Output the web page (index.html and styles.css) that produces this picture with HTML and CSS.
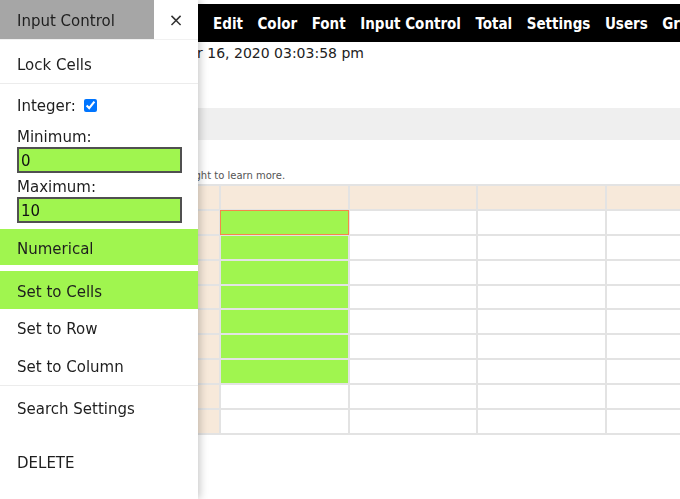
FILE: index.html
```html
<!DOCTYPE html>
<html lang="en">
<head>
    <meta charset="UTF-8">
    <meta name="viewport" content="width=device-width, initial-scale=1.0">
    <title>Sheet - Input Control</title>
    <link rel="stylesheet" href="styles.css">
</head>
<body>
    <div class="topbar">
        <span class="menu-item">Edit</span>
        <span class="menu-item">Color</span>
        <span class="menu-item">Font</span>
        <span class="menu-item">Input Control</span>
        <span class="menu-item">Total</span>
        <span class="menu-item">Settings</span>
        <span class="menu-item">Users</span>
        <span class="menu-item">Graph</span>
    </div>

    <div class="page">
        <p class="date">November 16, 2020 03:03:58 pm</p>
        <div class="band"></div>
        <p class="hint">Look right to learn more.</p>

        <div class="sheet" id="sheet">
            <!-- cells are built by the script below -->
        </div>
    </div>

    <div class="sidebar">
        <div class="sidebar-head">
            <div class="tab">Input Control</div>
            <div class="close">&times;</div>
        </div>
        <div class="item first">Lock Cells</div>

        <div class="fields">
            <div class="line">Integer: <input type="checkbox" checked></div>
            <label class="field-label" for="min">Minimum:</label>
            <input class="num" type="text" id="min" value="0">
            <label class="field-label second" for="max">Maximum:</label>
            <input class="num" type="text" id="max" value="10">
        </div>

        <div class="item numerical">Numerical</div>
        <div class="item active">Set to Cells</div>
        <div class="item">Set to Row</div>
        <div class="item last">Set to Column</div>
        <div class="item search">Search Settings</div>
        <div class="item delete">DELETE</div>
    </div>

    <script>
        const sheet = document.getElementById("sheet");
        const rows = 9;
        const cols = 5;

        // header row
        for (let c = 0; c <= cols; c++) {
            const cell = document.createElement("div");
            cell.classList.add("cell", "head");
            sheet.appendChild(cell);
        }

        for (let r = 1; r <= rows; r++) {
            const rowHead = document.createElement("div");
            rowHead.classList.add("cell", "head");
            sheet.appendChild(rowHead);

            for (let c = 1; c <= cols; c++) {
                const cell = document.createElement("div");
                cell.classList.add("cell");
                if (c === 1 && r <= 7) cell.classList.add("green");
                if (c === 1 && r === 1) cell.classList.add("selected");
                sheet.appendChild(cell);
            }
        }
    </script>
</body>
</html>
```

FILE: styles.css
```css
body {
    font-family: "DejaVu Sans", Verdana, sans-serif;
    margin: 0;
    padding: 0;
    background-color: #fff;
    color: #222;
    overflow: hidden;
    height: 499px;
}

.topbar {
    margin-top: 4px;
    height: 38px;
    box-sizing: border-box;
    padding-top: 2px;
    background: #000;
    display: flex;
    align-items: center;
    gap: 14.5px;
    padding-left: 213px;
    white-space: nowrap;
    overflow: hidden;
}

.menu-item {
    font-family: "DejaVu Sans Condensed", "DejaVu Sans", sans-serif;
    font-stretch: condensed;
    font-weight: bold;
    font-size: 15px;
    color: #fff;
}

.date {
    margin: 0;
    padding: 1px 0 0 130px;
    font-size: 14px;
    line-height: 20px;
    height: 20px;
    box-sizing: border-box;
    color: #222;
    white-space: nowrap;
}

.band {
    margin-top: 46px;
    height: 32px;
    background: #efefef;
}

.hint {
    margin: 30px 0 0;
    padding-left: 161px;
    font-size: 10px;
    line-height: 12px;
    color: #555;
    white-space: nowrap;
}

.sheet {
    margin-top: 2px;
    margin-left: 177px;
    display: grid;
    grid-template-columns: 40px repeat(5, 126.7px);
    grid-auto-rows: 22.9px;
    gap: 2px;
    padding: 2px;
    background: #e3e3e3;
    width: max-content;
}

.cell {
    background: #fff;
}

.cell.head {
    background: #f7e9da;
}

.cell.green {
    background: #a0f54f;
}

.cell.selected {
    outline: 1px solid #f5874a;
}

.sidebar {
    position: fixed;
    top: 0;
    left: 0;
    bottom: 0;
    width: 198px;
    background: #fff;
    box-shadow: 2px 0 8px rgba(0, 0, 0, 0.22);
    font-size: 15px;
    color: #1e1e1e;
    z-index: 10;
}

.sidebar-head {
    display: flex;
    height: 40px;
    border-bottom: 1px solid #f1f1f1;
    box-sizing: border-box;
}

.tab {
    width: 154px;
    background: #a6a6a6;
    padding: 2px 0 0 17px;
    line-height: 38px;
    box-sizing: border-box;
}

.close {
    flex: 1;
    text-align: center;
    line-height: 40px;
    font-size: 18px;
    color: #333;
}

.item {
    padding: 11px 17px 9px;
    line-height: 18px;
}

.item.first {
    margin-top: 5px;
    border-bottom: 1px solid #ececec;
}

.fields {
    padding: 13px 17px 0;
}

.line {
    line-height: 18px;
    height: 17px;
}

.line input {
    margin: 0 0 0 3px;
    width: 13px;
    height: 13px;
    vertical-align: -1px;
}

.field-label {
    display: block;
    margin-top: 14px;
    line-height: 18px;
    height: 17px;
}

.field-label.second {
    margin-top: 5px;
}

.num {
    display: block;
    margin-top: 2px;
    width: 165px;
    height: 26px;
    box-sizing: border-box;
    border: 2px solid #505050;
    background: #a0f54f;
    font-family: "DejaVu Sans", sans-serif;
    font-size: 15px;
    color: #111;
    padding: 1px 2px 0;
}

.item.numerical {
    margin-top: 6px;
    padding: 11px 17px 7px;
    background: #a0f54f;
}

.item.active {
    margin-top: 6px;
    padding: 12px 17px 8px;
    background: #a0f54f;
}

.item.last {
    border-bottom: 1px solid #ececec;
}

.item.search {
    margin-top: 3px;
}

.item.delete {
    margin-top: 16px;
}
```
